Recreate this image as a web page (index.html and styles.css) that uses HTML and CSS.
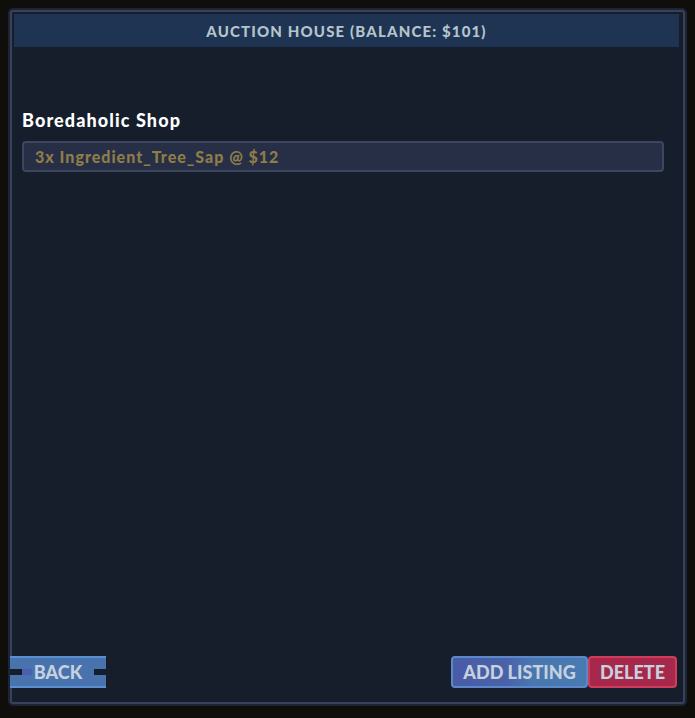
FILE: index.html
```html
<!DOCTYPE html>
<html lang="en">
<head>
  <meta charset="UTF-8" />
  <title>Auction House</title>
  <link rel="stylesheet" href="styles.css">
</head>
<body>
  <div class="window">
    <div class="frame">
      <div class="panel">
        <div class="panel-header">Auction House (Balance: $101)</div>

        <div class="panel-body">
          <h2 class="shop-name">Boredaholic Shop</h2>
          <div class="listing">3x Ingredient_Tree_Sap @ $12</div>
        </div>

        <!-- bottom action bar -->
        <div class="panel-footer">
          <button class="btn btn-back">Back</button>
          <div class="actions">
            <button class="btn btn-add">Add Listing</button>
            <button class="btn btn-delete">Delete</button>
          </div>
        </div>
      </div>
    </div>
  </div>
</body>
</html>
```

FILE: styles.css
```css
html, body {
  height: 100%;
}

body {
  margin: 0;
  background: #0f0e0a;
  font-family: Lato, "Open Sans", sans-serif;
  overflow: hidden;
}

.window {
  margin: 8px;
  height: 698px;
  box-sizing: border-box;
  border: 2px solid #1d2436;
  border-radius: 5px;
  background: #172030;
}

.frame {
  height: 100%;
  box-sizing: border-box;
  border: 2px solid #38425c;
  border-radius: 3px;
  padding: 2px;
  background: #161d2b;
}

.panel {
  height: 100%;
  display: flex;
  flex-direction: column;
  background: #161e2b;
}

.panel-header {
  height: 33px;
  margin-right: 2px;
  background: #1f3452;
  color: #b4c4cc;
  font-size: 15px;
  font-weight: 900;
  text-transform: uppercase;
  letter-spacing: 1.15px;
  display: flex;
  align-items: center;
  justify-content: center;
}

.panel-body {
  flex: 1;
  padding: 62px 17px 0 8px;
}

.shop-name {
  margin: 0 0 9px;
  color: #ffffff;
  font-size: 18px;
  font-weight: 900;
  line-height: 23px;
  letter-spacing: 1.1px;
}

.listing {
  height: 31px;
  box-sizing: border-box;
  padding: 0 11px;
  display: flex;
  align-items: center;
  background: #272f47;
  border: 2px solid #3c465f;
  border-radius: 4px;
  color: #8e7d48;
  font-size: 16px;
  font-weight: 900;
  letter-spacing: 1px;
}

.panel-footer {
  display: flex;
  justify-content: space-between;
  align-items: center;
  padding: 0 4px 12px 0;
}

.actions {
  display: flex;
}

.btn {
  height: 32px;
  box-sizing: border-box;
  font-family: Lato, sans-serif;
  font-size: 18px;
  font-weight: 900;
  text-transform: uppercase;
  color: #c6d1dd;
  cursor: pointer;
  padding: 0 10px;
}

.btn-back {
  position: relative;
  margin-left: -4px;
  width: 96px;
  background: #4873ae;
  border: none;
  border-top: 2px solid #5b8fd0;
  border-bottom: 2px solid #5b8fd0;
  border-radius: 0;
}

/* little notches on the ends of the back button */
.btn-back::before,
.btn-back::after {
  content: "";
  position: absolute;
  top: 11px;
  width: 12px;
  height: 6px;
  background: #161d2b;
}

.btn-back::before {
  left: 0;
  box-shadow: 10px 0 0 #4c5eaf;
}

.btn-back::after {
  right: 0;
}

.btn-add {
  width: 137px;
  background: linear-gradient(90deg, #4a5ba8 0%, #4a62aa 40%, #4877b0 60%, #4a7ab2 100%);
  border: 2px solid #5a88c8;
  border-radius: 4px;
}

.btn-delete {
  width: 89px;
  background: #a6284a;
  border: 2px solid #cf3c5e;
  border-radius: 4px;
}
```
